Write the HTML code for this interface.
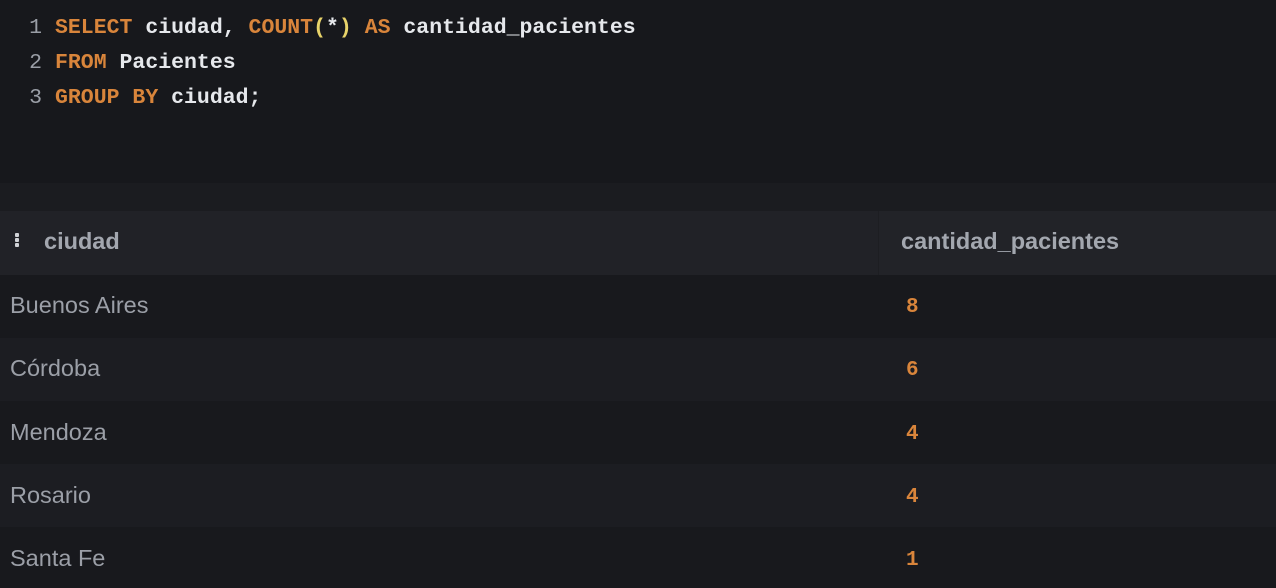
<!DOCTYPE html>
<html><head><meta charset="utf-8"><style>
*{margin:0;padding:0;box-sizing:border-box}
body{width:1276px;height:588px;background:#17181c;overflow:hidden;font-family:"Liberation Sans",sans-serif}
.code{position:absolute;left:0;top:0;width:1276px;height:183px;background:#17181c;font-family:"Liberation Mono",monospace;font-size:21.5px;color:#e6e8ec;font-weight:bold}
.ln{position:absolute;left:0;height:35px;line-height:35px;white-space:pre}
.n{display:inline-block;text-align:right;color:#9a9ea6;padding-right:13px;width:55px;font-weight:normal}
.k{color:#d9853b}
.p{color:#e8d36a}
.band{position:absolute;top:183px;left:0;width:1276px;height:28px;background:#1b1c20}
.hdr{position:absolute;top:211px;left:0;width:1276px;height:64px;background:#212227}
.hdr .c2{position:absolute;left:878px;top:0;width:398px;height:64px;border-left:1px solid #1d1e22;background:#222328}
.row{position:absolute;left:0;width:1276px;height:63px}
.t{position:absolute;font-size:23.5px;color:#9b9fa7}
.h{position:absolute;font-size:23.5px;font-weight:bold;color:#a3a7af}
.v{position:absolute;left:906px;font-family:"Liberation Mono",monospace;font-weight:bold;font-size:21px;color:#d9853b}
</style></head><body>
<div class="code">
<div class="ln" style="top:11px"><span class="n">1</span><span class="k">SELECT</span> ciudad, <span class="k">COUNT</span><span class="p">(</span>*<span class="p">)</span> <span class="k">AS</span> cantidad_pacientes</div>
<div class="ln" style="top:46px"><span class="n">2</span><span class="k">FROM</span> Pacientes</div>
<div class="ln" style="top:81px"><span class="n">3</span><span class="k">GROUP BY</span> ciudad;</div>
</div>
<div class="band"></div>
<div class="hdr"><div class="c2"></div>
<div style="position:absolute;left:15px;top:22px;width:4px">
<div style="width:4px;height:4px;background:#d0d2d6;margin-bottom:1px;border-radius:1px"></div>
<div style="width:4px;height:4px;background:#d0d2d6;margin-bottom:1px;border-radius:1px"></div>
<div style="width:4px;height:4px;background:#d0d2d6;border-radius:1px"></div></div>
<div class="h" style="left:44px;top:17px">ciudad</div>
<div class="h" style="left:901px;top:17px">cantidad_pacientes</div>
</div>
<div class="row" style="top:275px;background:#18191d"><div class="t" style="left:10px;top:17px">Buenos Aires</div><div class="v" style="top:21px">8</div></div>
<div class="row" style="top:338px;background:#1c1d22"><div class="t" style="left:10px;top:17px">Córdoba</div><div class="v" style="top:21px">6</div></div>
<div class="row" style="top:401px;background:#18191d"><div class="t" style="left:10px;top:18px">Mendoza</div><div class="v" style="top:22px">4</div></div>
<div class="row" style="top:464px;background:#1c1d22"><div class="t" style="left:10px;top:18px">Rosario</div><div class="v" style="top:22px">4</div></div>
<div class="row" style="top:527px;height:61px;background:#18191d"><div class="t" style="left:10px;top:18px">Santa Fe</div><div class="v" style="top:22px">1</div></div>
</body></html>
